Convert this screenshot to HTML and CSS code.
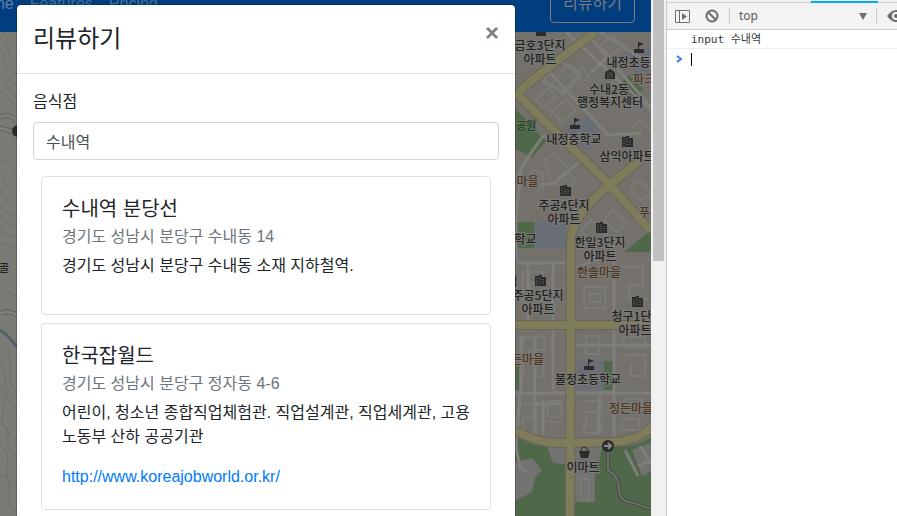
FILE: index.html
```html
<!DOCTYPE html>
<html lang="ko">
<head>
<meta charset="utf-8">
<title>리뷰하기</title>
<link rel="stylesheet" href="styles.css">
</head>
<body>
<div class="workspace">
  <div class="page">
    <nav class="navbar">
      <a class="nav-link active" href="#">Home</a>
      <a class="nav-link" href="#">Features</a>
      <a class="nav-link" href="#">Pricing</a>
      <button class="btn-outline" type="button">리뷰하기</button>
    </nav>
    <svg class="map" viewBox="0 32 651 484" preserveAspectRatio="xMinYMin slice" role="img" aria-label="지도">
      <defs>
        <g id="apt"><path d="M-5-5h4v-1h3v2h4v9H-5z"/><path class="win" d="M-3-3v7M0-4v8M3-2v6" stroke-dasharray="1 1"/></g>
        <g id="school"><path d="M-5 1h10v4H-5zM-1-6h1v7h-1zM0-6l5 2-5 2z"/></g>
      </defs>
      <rect class="land" y="32" width="651" height="484"/>
      <rect class="hill" y="32" width="17" height="484"/>
      <g class="contour">
        <path d="M0 38q9 4 8 12t9 10M4 32q3 10 13 15M10 32q1 5 7 6M0 50q5 2 4 9t13 15M0 63q6 4 7 11t10 10M0 76q7 4 8 11t9 10M0 92q8 2 10 9l7 5M1 162q5-5 9 2t7 12M0 172q6 20 17 24M0 190q7 14 17 16M0 205q11 14 17 10M0 217q12 12 17 8M0 230q13 10 17 5M0 242q11 8 17 2M0 301q6-4 17-7M0 345q12 10 10 24t7 24M0 362q6 10 6 27t11 20M0 385q8 13 3 27t14 28M0 423q10 5 8 17t9 17M0 445q10 7 7 22t10 18M0 474q12 2 9 18t8 20"/>
      </g>
      <path class="lane-edge" d="M0 117q12-4 17 5M0 128l17 5M0 314q8-5 17 1"/>
      <path class="lane" d="M0 117q12-4 17 5M0 128l17 5M0 314q8-5 17 1"/>
      <path class="river" d="M0 330q7 4 17 17"/>
      <circle class="dark" cx="18" cy="131" r="6"/>

      <g class="park">
        <path d="M515 110q8 4 14 15l17 16-14 16-17-8zM617 86l12-11 14 14-12 12zM515 222h19v26h-19zM624 252l27-22v22zM604 361h10v29h-10zM515 367l4-2v25h-4zM515 430q20 9 50 16v70h-50zM575 446h35q28 2 41-9v79h-76z"/>
      </g>
      <g class="campus">
        <path d="M534 222h32v26h-32zM565 128l22-12 13 10-10 24-10-4zM625 54l26-6v26l-12 4zM577 361h27v29h-27z"/>
      </g>
      <path class="plot" d="M547 446h18v18l-12-1zM575 446h28l-8 30v26h-20zM515 462l17-4 10 12-7 8-3 14-17 9zM632 450l19-7v29l-9 4z"/>
      <g class="lane">
        <path d="M566 32l85 78M585 32l66 75M558 60l-15 21 22 12 15-20-22-13M590 73l20-18M600 32l51 32M550 73l58 62 34-2M515 180q20-36 30-45M541 184h12l26-22M517 263h48M522 170q-9 50-5 90M528 263v57M553 263v57M553 330v60M521 335v52q-3 30-5 60l4 20 7 5M575 268l30-12M614 250v68M614 327v110M575 345h76M575 393h76M515 393h50M543 400v35M600 392l-2 43M535 335v110M535 404h27M625 450l13 26M640 446l11 18M638 466l13-6"/>
      </g>
      <g class="outline">
        <path d="M551 83l18-18 12 12-18 18zM570 76l12-9 7 10-11 9zM536 100l12-12 8 9-12 11zM552 111l15-12 9 11-14 12zM599 46l14-11 10 11-13 10zM605 90l8-8 9 10-8 7zM551 180l-7-20 10-6 12 12M564 170l12 11-10 9-12-8M531 170v17h12v-14zM581 230l10-10 17 17-11 11zM604 220l9-10 14 13-10 9zM630 188l10-8 11 12-10 9zM632 128l9-9 10 12M640 210l11-12M523 272h20v11h-13v12h12v14h-20zM584 287h21v21h-21zM590 294h10v8h-10zM622 267h21v18h-14v14h20M523 337h21v13h-14v13h13v13h-19zM586 336h13v18h-13zM624 337h21v10h-21zM625 355h20v21h-14v-12M586 401h15v11h-15v12h15v9h-17v-9M548 401h13v16h-13zM549 422h13M523 404h10v14h-10v14h13M624 399h18v11h-18zM622 419h17v11h-17zM581 479h8v21h-8z"/>
      </g>
      <path class="road-edge" d="M595 32Q569 52 548 68T519 92L515 96M515 92L610 185 651 231M651 151L610 185Q576 211 571 237L570 516M515 325L651 325M515 430Q535 443 560 443L614 442Q640 440 651 427"/>
      <path class="road" d="M595 32Q569 52 548 68T519 92L515 96M515 92L610 185 651 231M651 151L610 185Q576 211 571 237L570 516M515 325L651 325M515 430Q535 443 560 443L614 442Q640 440 651 427"/>
      <path class="trail-edge" d="M608 450v20q11 6 11 19t15 14l17 6"/>
      <path class="trail" d="M608 450v20q11 6 11 19t15 14l17 6"/>

      <g class="dark">
        <path d="M536 32h10v4h-10z"/>
        <use href="#school" x="639" y="48"/>
        <path d="M605 79v-5q0-3 4-4v-1h2v1q4 1 4 4v5z"/>
        <use href="#school" x="575" y="124"/>
        <use href="#apt" x="627" y="142"/>
        <use href="#apt" x="565" y="191"/>
        <use href="#apt" x="601" y="228"/>
        <use href="#apt" x="540" y="281"/>
        <use href="#apt" x="637" y="302"/>
        <use href="#school" x="589" y="365"/>
        <path d="M579 451h11l-2 7h-7z"/>
        <circle cx="608" cy="446" r="6"/>
      </g>
      <path class="bag" d="M581 451q0-4 3-4t4 4"/>
      <path class="arrow" d="M604 446h7M608 443l3 3-3 3"/>
      <path class="win" d="M608 73v5M610 72v6M612 73v5" stroke-dasharray="1 1"/>
      <g class="label">
        <text x="540" y="50">금호3단지</text><text x="540" y="64">아파트</text>
        <text x="634" y="67">내정초등학</text>
        <text x="609" y="94">수내2동</text><text x="610" y="107">행정복지센터</text>
        <text x="574" y="144">내정중학교</text><text x="627" y="161">삼익아파트</text>
        <text x="564" y="210">주공4단지</text><text x="564" y="224">아파트</text>
        <text x="520" y="244">내학교</text>
        <text x="600" y="247">한일3단지</text><text x="600" y="261">아파트</text>
        <text x="512" y="286">서</text>
        <text x="538" y="300">주공5단지</text><text x="538" y="314">아파트</text>
        <text x="637" y="321">청구1단지</text><text x="635" y="335">아파트</text>
        <text x="588" y="384">불정초등학교</text>
        <text x="583" y="472">이마트</text>
        <text class="small" x="4" y="272">골</text>
      </g>
      <g class="label brown">
        <text x="644" y="84">파크</text><text x="522" y="186">은마을</text><text x="650" y="217">푸른</text>
        <text x="599" y="277">한솔마을</text><text x="522" y="364">정든마을</text><text x="631" y="413">정든마을</text>
      </g>
      <g class="label green"><text class="small" x="526" y="130">공원</text></g>
    </svg>
    <section class="modal" role="dialog" aria-labelledby="modal-title">
      <header class="modal-header">
        <h1 id="modal-title">리뷰하기</h1>
        <button class="close" type="button" aria-label="닫기">×</button>
      </header>
      <div class="modal-body">
        <label for="restaurant">음식점</label>
        <input class="field" id="restaurant" type="text" value="수내역">
        <div class="results">
          <article class="card">
            <h2>수내역 분당선</h2>
            <h3>경기도 성남시 분당구 수내동 14</h3>
            <p>경기도 성남시 분당구 수내동 소재 지하철역.</p>
          </article>
          <article class="card">
            <h2>한국잡월드</h2>
            <h3>경기도 성남시 분당구 정자동 4-6</h3>
            <p>어린이, 청소년 종합직업체험관. 직업설계관, 직업세계관, 고용노동부 산하 공공기관</p>
            <a href="http://www.koreajobworld.or.kr/">http://www.koreajobworld.or.kr/</a>
          </article>
        </div>
      </div>
    </section>
  </div>
  <div class="scrollbar"><div class="thumb"></div></div>
  <aside class="devtools">
    <div class="tabs"><div class="tab-marker"></div></div>
    <div class="toolbar">
      <button class="tool" type="button" aria-label="사이드바">
        <svg width="15" height="13" viewBox="0 0 15 13"><path d="M.5.5h14v12H.5zM4.5 1v11" fill="none" stroke="#6e6e6e"/><path d="M7 3l5 3.500-5 3.500z" fill="#6e6e6e"/></svg>
      </button>
      <button class="tool ban" type="button" aria-label="지우기">
        <svg width="14" height="14" viewBox="0 0 14 14"><path d="M3 3l8 8" stroke="#6e6e6e" stroke-width="2"/><circle cx="7" cy="7" r="5.500" fill="none" stroke="#6e6e6e" stroke-width="2"/></svg>
      </button>
      <div class="context">
        <select aria-label="컨텍스트"><option>top</option></select>
        <svg width="8" height="7" viewBox="0 0 8 7"><path d="M0 0h8L4 7z" fill="#6e6e6e"/></svg>
      </div>
      <button class="tool eye" type="button" aria-label="표현식">
        <svg width="18" height="12" viewBox="0 0 18 12"><path d="M0 6q9-12 18 0-9 12-18 0z" fill="#6e6e6e"/><circle cx="9" cy="6" r="4" fill="#f3f3f3"/><circle cx="9" cy="6" r="2" fill="#6e6e6e"/></svg>
      </button>
    </div>
    <div class="log">input 수내역</div>
    <div class="prompt">
      <svg width="6" height="8" viewBox="0 0 6 8"><path d="M1 1l4 3-4 3" fill="none" stroke="#367cf1" stroke-width="2"/></svg>
      <input type="text" aria-label="콘솔">
    </div>
  </aside>
</div>
</body>
</html>
```
FILE: styles.css
```css
* { box-sizing: border-box; }
body {
  margin: 0;
  overflow: hidden;
  color: #212529;
  font: 16px/24px "Liberation Sans", "Noto Sans CJK KR", sans-serif;
}
button, input, select { font: inherit; }
h1, h2, h3, p { margin: 0; font-weight: 400; }
a { color: #007bff; text-decoration: none; }

.workspace {
  display: grid;
  grid-template-columns: 1fr 15px 231px;
  height: 100vh;
}
.page {
  position: relative;
  display: flex;
  flex-direction: column;
  min-width: 0;
  overflow: hidden;
}

/* Navigation, scrolled partly out of view */
.navbar {
  display: flex;
  align-items: center;
  flex: none;
  height: 56px;
  margin-top: -24px;
  margin-left: -37px;
  padding: 8px 16px 8px 0;
  background: #003e80;
}
.nav-link { padding: 8px; color: #406e9f; }
.nav-link.active { color: #5f7f9f; }
.btn-outline {
  margin-left: auto;
  padding: 6px 12px;
  border: 1px solid #7c7d7d;
  border-radius: 4px;
  background: none;
  color: #7c7d7d;
}

/* Map */
.map { display: block; flex: 1; width: 100%; min-height: 0; }
.land { fill: #74716d; }
.hill { fill: #7b7b75; }
.contour { fill: none; stroke: #6f6f69; }
.park { fill: #50684a; }
.campus { fill: #696e77; }
.plot { fill: #727370; }
.lane-edge { fill: none; stroke: #62625e; stroke-width: 5; }
.lane { fill: none; stroke: #7f7e7b; stroke-width: 3; }
.outline { fill: none; stroke: #7c7a76; stroke-width: 2; }
.road-edge { fill: none; stroke: #686655; stroke-width: 10; }
.road { fill: none; stroke: #7f7c5c; stroke-width: 8; }
.river { fill: none; stroke: #52616b; stroke-width: 3; }
.trail-edge { fill: none; stroke: #414d40; stroke-width: 4; }
.trail { fill: none; stroke: #6b7269; stroke-width: 2; }
.dark { fill: #2b2b2b; }
.win { fill: none; stroke: #777; }
.bag { fill: none; stroke: #2b2b2b; stroke-width: 1; }
.arrow { fill: none; stroke: #888; stroke-width: 2; }
.label {
  fill: #202020;
  stroke: #7d7b77;
  stroke-width: 2px;
  paint-order: stroke;
  text-anchor: middle;
  font: 500 12px "Noto Sans CJK KR", sans-serif;
}
.label .small { font-size: 11px; }
.brown { fill: #4d3522; }
.green { fill: #243d29; stroke: #5d7058; }

/* Review dialog */
.modal {
  position: absolute;
  top: 5px;
  left: 17px;
  right: 136px;
  min-height: 100%;
  border-radius: 4px 4px 0 0;
  background: #fff;
  box-shadow: 0 0 0 1px rgba(0, 0, 0, .2);
}
.modal-header {
  display: flex;
  align-items: flex-start;
  justify-content: space-between;
  padding: 16px;
  border-bottom: 1px solid #dee2e6;
}
.modal-header h1 { font-size: 24px; line-height: 36px; }
.close {
  padding: 0;
  border: 0;
  background: none;
  color: #7f7f7f;
  font-size: 24px;
  font-weight: 700;
  line-height: 24px;
}
.modal-body { padding: 16px; }
.modal-body label { display: block; margin-bottom: 8px; }
.field {
  display: block;
  width: 100%;
  height: 38px;
  padding: 6px 12px;
  border: 1px solid #ced4da;
  border-radius: 4px;
  background: #fff;
  color: #495057;
}
.results {
  display: flex;
  flex-direction: column;
  gap: 8px;
  padding: 16px 8px;
}
.card {
  padding: 20px;
  border: 1px solid #dfdfdf;
  border-radius: 4px;
}
.card h2 { margin-bottom: 6px; font-size: 20px; line-height: 24px; }
.card h3 { margin-bottom: 8px; color: #6c757d; font-size: 16px; line-height: 19px; }
.card p { margin-bottom: 16px; }
.card a { display: block; }

/* Window scrollbar */
.scrollbar { padding: 0 2px; background: #f1f1f1; }
.thumb { height: 261px; background: #c1c1c1; }

/* Developer console */
.devtools {
  border-left: 1px solid #ccc;
  background: #fff;
  overflow: hidden;
}
.tabs {
  display: flex;
  align-items: flex-end;
  height: 3px;
  padding-left: 144px;
  background: #f3f3f3;
  border-bottom: 1px solid #ccc;
}
.tab-marker { width: 67px; height: 2px; margin-bottom: -1px; background: #03a9f4; }
.toolbar {
  display: flex;
  align-items: center;
  height: 27px;
  padding-left: 8px;
  border-bottom: 1px solid #ccc;
  background: #f3f3f3;
}
.tool { display: flex; flex: none; padding: 0; border: 0; background: none; }
.ban { margin-left: 15px; }
.context {
  display: flex;
  align-items: center;
  flex: 1;
  height: 16px;
  margin-left: 10px;
  padding: 0 9px;
  border: solid #ccc;
  border-width: 0 1px;
}
.context select {
  flex: 1;
  padding: 0;
  border: 0;
  appearance: none;
  background: none;
  color: #5a5a5a;
  font: 12px/16px "Noto Sans", sans-serif;
}
.eye { margin-left: 10px; margin-right: -8px; }
.log {
  height: 19px;
  padding-left: 24px;
  border-bottom: 1px solid #f0f0f0;
  color: #303942;
  font: 11px/20px "DejaVu Sans Mono", "Noto Sans CJK KR", monospace;
}
.prompt {
  display: flex;
  align-items: center;
  gap: 9px;
  height: 20px;
  padding-left: 9px;
}
.prompt input {
  flex: 1;
  min-width: 0;
  height: 13px;
  padding: 0;
  border: 0;
  border-left: 1px solid #000;
  outline: 0;
  background: none;
  font: 11px/13px "DejaVu Sans Mono", monospace;
}
```
